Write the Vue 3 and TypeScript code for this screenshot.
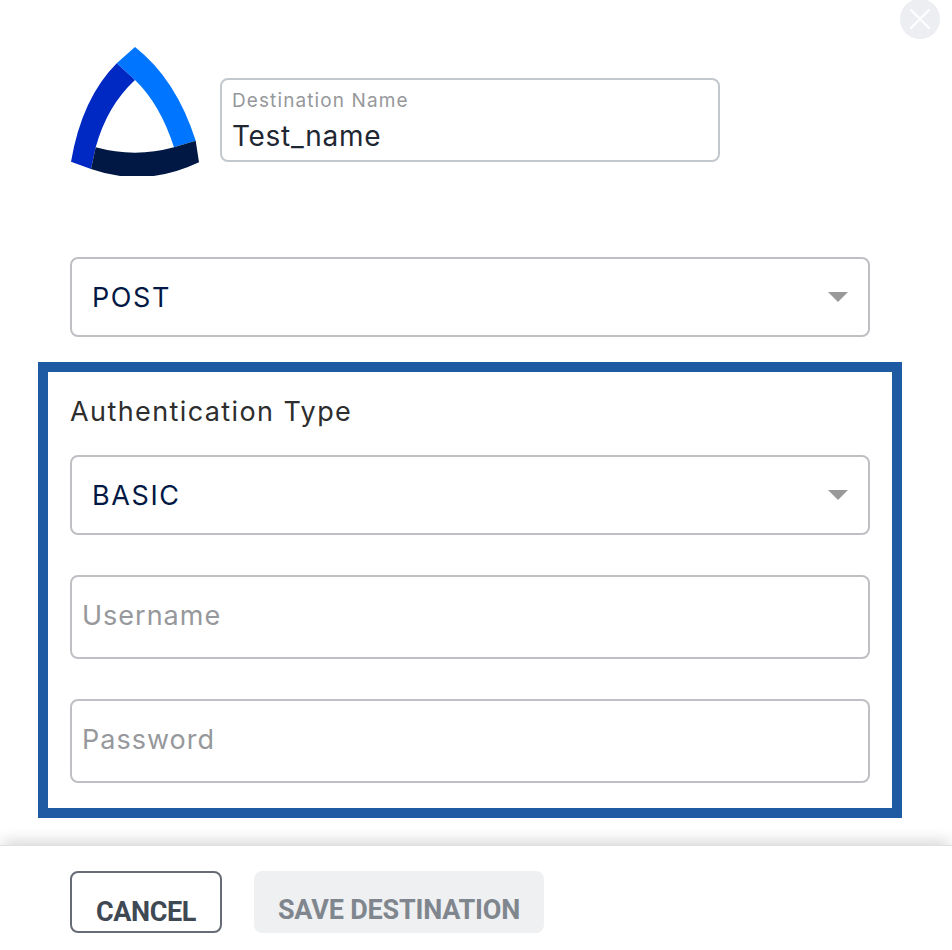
<script setup lang="ts">
import { computed, ref } from 'vue';

const name = ref('Test_name');
const method = ref('POST');
const authType = ref('BASIC');
const username = ref('');
const password = ref('');

const canSave = computed(() => !!username.value && !!password.value);
</script>

<template>
  <div class="page">
    <button class="close" aria-label="Close">
      <svg width="20" height="20" viewBox="0 0 20 20">
        <path d="M1 1 L19 19 M19 1 L1 19" stroke="#fff" stroke-width="2" stroke-linecap="round" fill="none" />
      </svg>
    </button>

    <div class="head">
      <svg class="logo" width="130" height="130" viewBox="0 0 130 130">
        <path d="M65 1 Q106 33 125.7 94.7 L104 101.3 Q90 58 65 34 L46.7 17.3 Z" fill="#0075ff" />
        <path d="M46.7 17.3 L65 34 Q37 60 25.7 101.3 L21 123 L1 115.7 Q12 52 46.7 17.3 Z" fill="#0029c4" />
        <path d="M25.7 101.3 Q65 112 104 101.3 L125.7 94.7 L129 116.3 Q75 142 21 123 Z" fill="#021844" />
      </svg>
      <label class="name-field">
        <span class="name-label">Destination Name</span>
        <input v-model="name" class="name-input" type="text" />
      </label>
    </div>

    <div class="select-wrap method">
      <select v-model="method">
        <option>POST</option>
        <option>PUT</option>
      </select>
      <span class="arrow"></span>
    </div>

    <section class="auth-box">
      <h3 class="auth-title">Authentication Type</h3>
      <div class="select-wrap">
        <select v-model="authType">
          <option>BASIC</option>
          <option>NONE</option>
        </select>
        <span class="arrow"></span>
      </div>
      <input v-model="username" class="text-input" type="text" placeholder="Username" />
      <input v-model="password" class="text-input" type="password" placeholder="Password" />
    </section>

    <footer class="foot">
      <button class="btn cancel">CANCEL</button>
      <button class="btn save" :disabled="!canSave">SAVE DESTINATION</button>
    </footer>
  </div>
</template>

<style>
body { background: #fff; }
</style>

<style scoped>
.page { position: relative; width: 952px; height: 950px; box-sizing: border-box; padding-top: 46px; background: #fff; overflow: hidden; font-family: "Inter", "Open Sans", sans-serif; }
.close { position: absolute; top: -1px; left: 900px; width: 40px; height: 40px; border: none; border-radius: 50%; background: #eceef2; padding: 0; display: flex; align-items: center; justify-content: center; }

.head { display: flex; align-items: flex-start; gap: 20px; margin-left: 70px; }
.logo { display: block; }
.name-field { box-sizing: border-box; width: 500px; height: 84px; margin-top: 32px; border: 2px solid #c3c8ce; border-radius: 8px; padding: 9px 10px 0; display: flex; flex-direction: column; }
.name-label { font-size: 19px; line-height: 24px; color: #96989b; letter-spacing: 1.1px; }
.name-input { border: none; outline: none; padding: 0; margin-top: 6px; font: inherit; font-size: 28px; line-height: 34px; letter-spacing: .7px; color: #1f2733; background: transparent; }

.select-wrap { position: relative; height: 80px; }
.method { margin: 81px 82px 25px 70px; }
.select-wrap select { display: block; width: 100%; height: 100%; box-sizing: border-box; appearance: none; background: #fff; border: 2px solid #bfc0c4; border-radius: 8px; padding: 0 0 0 20px; font: inherit; font-size: 27px; letter-spacing: 1.6px; color: #021844; outline: none; }
.arrow { position: absolute; right: 22px; top: 35px; width: 0; height: 0; border-left: 10px solid transparent; border-right: 10px solid transparent; border-top: 10px solid #999; pointer-events: none; }

.auth-box { box-sizing: border-box; width: 864px; height: 456px; margin-left: 38px; border: 10px solid #1f5ba3; padding: 0 22px 25px; display: flex; flex-direction: column; }
.auth-box .select-wrap { flex: none; }
.auth-title { margin: 23px 0 27px; font-size: 27px; line-height: 33px; font-weight: 400; letter-spacing: 1.4px; color: #2e2e2e; }
.text-input { box-sizing: border-box; height: 84px; margin-top: 40px; border: 2px solid #bfc0c4; border-radius: 8px; padding: 0 10px 4px; font: inherit; font-size: 27px; letter-spacing: 1px; color: #1f2733; outline: none; }
.text-input::placeholder { color: #96989b; opacity: 1; }

.foot { margin-top: 27px; height: 105px; box-sizing: border-box; border-top: 1px solid #e0e0e0; box-shadow: 0 -6px 14px -2px rgba(0, 0, 0, .16); background: #fff; padding: 25px 0 0 70px; display: flex; gap: 32px; align-items: flex-start; }
.btn { box-sizing: border-box; height: 62px; border-radius: 8px; font-family: "Roboto", "Liberation Sans", sans-serif; font-size: 27px; font-weight: 700; letter-spacing: -.2px; }
.cancel { width: 152px; background: #fff; border: 2px solid #666b75; color: #3f4954; padding: 20px 0 0; letter-spacing: -.4px; }
.save { width: 290px; background: #eff0f2; border: none; color: #80868d; padding: 16px 0 0; }
</style>
